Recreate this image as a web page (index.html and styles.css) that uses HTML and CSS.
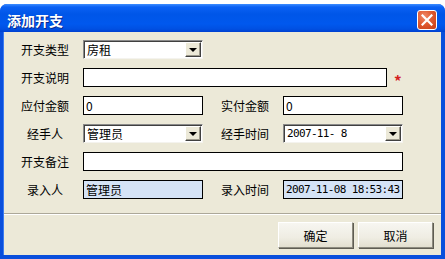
FILE: index.html
```html
<!DOCTYPE html>
<html>
  <head>
    <meta charset="utf-8">
    <title>添加开支</title>
    <link rel="stylesheet" href="styles.css">
  </head>
  <body>
    <div class="window">
      <div class="titlebar">
        <span class="title">添加开支</span>
        <button type="button" class="btn-close" aria-label="关闭">
          <svg width="12" height="12" viewBox="0 0 12 12"><path d="M1.5 1.5 L10.5 10.5 M10.5 1.5 L1.5 10.5" stroke="#fff" stroke-width="2.2" stroke-linecap="square"/></svg>
        </button>
      </div>

      <div class="client">
        <!-- 表单 -->
        <form class="form-grid">
          <label class="lbl">开支类型</label>
          <div class="combo"><span class="combo-text">房租</span><span class="combo-btn"></span></div>
          <span></span><span></span>

          <label class="lbl">开支说明</label>
          <div class="wide">
            <input type="text" class="field field-long">
            <span class="required">*</span>
          </div>

          <label class="lbl">应付金额</label>
          <input type="text" class="field" value="0">
          <label class="lbl">实付金额</label>
          <input type="text" class="field" value="0">

          <label class="lbl">经手人</label>
          <div class="combo"><span class="combo-text">管理员</span><span class="combo-btn"></span></div>
          <label class="lbl">经手时间</label>
          <div class="combo"><span class="combo-text mono">2007-11- 8</span><span class="combo-btn"></span></div>

          <label class="lbl">开支备注</label>
          <div class="wide">
            <input type="text" class="field field-full">
          </div>

          <label class="lbl">录入人</label>
          <div class="field readonly">管理员</div>
          <label class="lbl">录入时间</label>
          <div class="field readonly mono">2007-11-08 18:53:43</div>
        </form>

        <div class="separator"></div>

        <div class="actions">
          <button type="button" class="btn">确定</button>
          <button type="button" class="btn">取消</button>
        </div>
      </div>
    </div>
  </body>
</html>
```

FILE: styles.css
```css
body{margin:0;padding:0;background:#fff;font-family:"Noto Sans CJK SC","Noto Sans",sans-serif;font-size:12px;color:#000}
*{box-sizing:border-box}
button,input{margin:0;font-family:inherit;font-size:inherit;outline:none}

.window{margin-top:4px;width:445px;height:255px;display:flex;flex-direction:column;background:#0a4fdc;border-radius:7px 7px 0 0;overflow:hidden}
.titlebar{height:28px;flex:none;display:flex;align-items:center;justify-content:space-between;padding:0 8px 0 7px;
  background:linear-gradient(to bottom,#3d8dff 0,#0b61f4 3px,#0056e8 10px,#0058ee 20px,#0050e2 25px,#0040d0 28px)}
.title{color:#fff;font-size:14px;font-weight:bold;line-height:16px;margin-top:3px;text-shadow:1px 1px 0 #0a2a90}
.btn-close{width:20px;height:20px;margin-top:4px;padding:0;display:flex;align-items:center;justify-content:center;border:1px solid #fff;border-radius:3px;
  background:radial-gradient(circle at 35% 30%,#f08a6a 0,#e05a30 45%,#c63c16 100%)}

.client{flex:1;margin:0 4px 4px 3px;background:#ece9d8;display:flex;flex-direction:column;border-left:1px solid #3b7bf0}

.form-grid{display:grid;grid-template-columns:62px 138px 62px 120px;grid-auto-rows:19px;row-gap:9px;padding:8px 0 0 17px;align-items:center}
.lbl{width:48px;text-align:center;line-height:17px;white-space:nowrap}
.field{width:120px;height:19px;padding:0 2px;border:1px solid #000;background:#fff;line-height:17px;color:#000;white-space:nowrap;overflow:hidden}
.field-long{width:304px}
.field-full{width:320px}
.wide{grid-column:2 / 5;display:flex;align-items:center}
.required{color:#d42020;margin-left:7px;font-size:15px;font-weight:bold;line-height:12px;padding-top:6px}
.readonly{background:#d5e3f6}
.mono{font-family:"DejaVu Sans Mono",monospace;font-size:11px;letter-spacing:-0.65px}

.combo{width:120px;height:19px;display:flex;align-items:center;justify-content:space-between;background:#fff;
  border:1px solid;border-color:#8a8a8a #f4f3ee #f4f3ee #8a8a8a;box-shadow:inset 1px 1px 0 #404040}
.combo-text{padding-left:3px;line-height:17px;white-space:nowrap}
.combo-btn{width:16px;height:15px;margin-right:1px;position:relative;background:#ece9d8;
  border:1px solid;border-color:#fff #404040 #404040 #fff;box-shadow:inset -1px -1px 0 #9d9a8c}
.combo-btn::after{content:"";position:absolute;left:3px;top:5px;border-style:solid;border-width:4px 4px 0;border-color:#000 transparent transparent}

.separator{margin-top:14px;height:2px;border-top:1px solid #aca899;border-bottom:1px solid #fff}

.actions{display:flex;justify-content:flex-end;gap:5px;padding:7px 8px 0 0}
.btn{width:75px;height:26px;padding:0;color:#000;background:linear-gradient(to bottom,#f7f6f1 0,#efede3 60%,#e2dfcf 100%);
  border:1px solid;border-color:#fff #8c8a7e #8c8a7e #fff;box-shadow:1px 1px 0 #5e5c52}
```
